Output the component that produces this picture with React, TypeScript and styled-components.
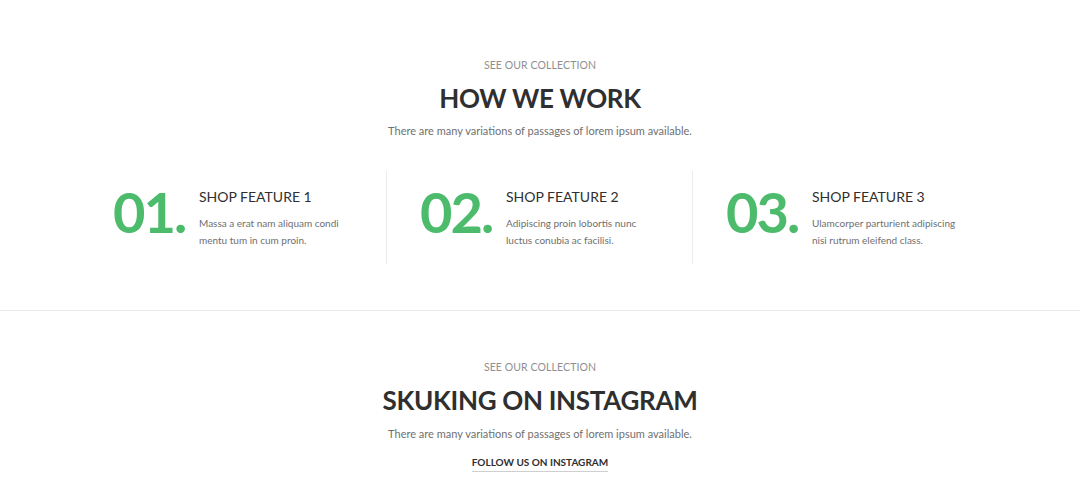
import { createGlobalStyle, styled } from "styled-components";

const GlobalStyle = createGlobalStyle`
  html, body {
    margin: 0;
    padding: 0;
    background: #ffffff;
  }
  body {
    font-family: "Lato", "Open Sans", sans-serif;
    color: #333333;
  }
`;

type Feature = {
  num: string;
  title: string;
  text: string[];
};

const features: Feature[] = [
  {
    num: "01.",
    title: "SHOP FEATURE 1",
    text: ["Massa a erat nam aliquam condi", "mentu tum in cum proin."],
  },
  {
    num: "02.",
    title: "SHOP FEATURE 2",
    text: ["Adipiscing proin lobortis nunc", "luctus conubia ac facilisi."],
  },
  {
    num: "03.",
    title: "SHOP FEATURE 3",
    text: ["Ulamcorper parturient adipiscing", "nisi rutrum eleifend class."],
  },
];

export default function App() {
  return (
    <>
      <GlobalStyle />
      <Page>
        <Section $top={57} $bottom={46}>
          <SectionHead>
            <Eyebrow>SEE OUR COLLECTION</Eyebrow>
            <Title>HOW WE WORK</Title>
            <Lead>There are many variations of passages of lorem ipsum available.</Lead>
          </SectionHead>
          <FeatureRow>
            {features.map((f, i) => (
              <FeatureCol key={f.num} $first={i === 0}>
                <Number>{f.num}</Number>
                <FeatureBody>
                  <FeatureTitle>{f.title}</FeatureTitle>
                  <FeatureText>
                    {f.text[0]}
                    <br />
                    {f.text[1]}
                  </FeatureText>
                </FeatureBody>
              </FeatureCol>
            ))}
          </FeatureRow>
        </Section>
        <Divider />
        <Section $top={48} $bottom={20}>
          <SectionHead>
            <Eyebrow>SEE OUR COLLECTION</Eyebrow>
            <Title $tight>SKUKING ON INSTAGRAM</Title>
            <Lead>There are many variations of passages of lorem ipsum available.</Lead>
            <FollowLink href="#">FOLLOW US ON INSTAGRAM</FollowLink>
          </SectionHead>
        </Section>
      </Page>
    </>
  );
}

const Page = styled.div`
  width: 1080px;
`;

const Section = styled.section<{ $top: number; $bottom: number }>`
  padding: ${(p) => p.$top}px 0 ${(p) => p.$bottom}px;
`;

const SectionHead = styled.div`
  display: flex;
  flex-direction: column;
  align-items: center;
  text-align: center;
`;

const Eyebrow = styled.div`
  font-size: 10.5px;
  line-height: 16px;
  color: #8f8f8f;
  letter-spacing: 0.1px;
`;

const Title = styled.h2<{ $tight?: boolean }>`
  margin: ${(p) => (p.$tight ? "8px 0 1px" : "8px 0 0")};
  font-size: 26px;
  line-height: 34px;
  font-weight: 700;
  color: #2f2f2f;
  letter-spacing: -0.3px;
`;

const Lead = styled.p`
  margin: 7px 0 0;
  font-size: 11px;
  line-height: 18px;
  color: #6f6f6f;
`;

const FeatureRow = styled.div`
  display: grid;
  grid-template-columns: repeat(3, 306px);
  margin: 31px 0 0 80px;
`;

const FeatureCol = styled.div<{ $first: boolean }>`
  display: flex;
  align-items: flex-start;
  padding: 16px 0 15px 33px;
  border-left: ${(p) => (p.$first ? "none" : "1px solid #ececec")};
`;

const Number = styled.div`
  width: 86px;
  font-size: 56px;
  line-height: 56px;
  font-weight: 700;
  color: #4cbb6c;
  letter-spacing: -2px;
  margin-top: -3px;
`;

const FeatureBody = styled.div`
  display: flex;
  flex-direction: column;
`;

const FeatureTitle = styled.h3`
  margin: 0;
  font-size: 14px;
  line-height: 20px;
  font-weight: 400;
  color: #2f2f2f;
`;

const FeatureText = styled.p`
  margin: 8px 0 0;
  font-size: 10px;
  line-height: 17px;
  color: #6f6f6f;
`;

const Divider = styled.hr`
  margin: 0;
  border: none;
  border-top: 1px solid #e9e9e9;
`;

const FollowLink = styled.a`
  margin-top: 12px;
  font-size: 10px;
  line-height: 14px;
  font-weight: 700;
  color: #2f2f2f;
  text-decoration: none;
  padding-bottom: 2px;
  border-bottom: 1px solid #cfcfcf;
`;
